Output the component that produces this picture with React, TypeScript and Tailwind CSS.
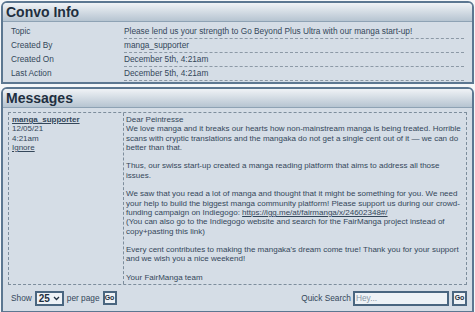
export default function App() {
  const rows = [
    ["Topic", "Please lend us your strength to Go Beyond Plus Ultra with our manga start-up!"],
    ["Created By", "manga_supporter"],
    ["Created On", "December 5th, 4:21am"],
    ["Last Action", "December 5th, 4:21am"],
  ]

  return (
    <div
      className="w-[475px] h-[312px] bg-[#f5f7f9] px-[1px] pt-[1px] text-[#34475a] overflow-hidden"
      style={{ fontFamily: "'Liberation Sans', Arial, sans-serif" }}
    >
      {/* Convo Info */}
      <div className="border-2 border-[#5c7791] rounded-t-[6px] overflow-hidden">
        <div className="h-[19px] bg-gradient-to-b from-[#f0f3f6] to-[#b6c4d1] border-b border-[#8ea2b4] pl-[3px] flex items-center">
          <span className="text-[14px] font-bold text-[#1f2f40]">Convo Info</span>
        </div>
        <div className="bg-[#d5dde6] px-[8px] pt-[3px] pb-[1px]">
          {rows.map(([label, value]) => (
            <div key={label} className="grid grid-cols-[113px_1fr] h-[14px] text-[8.3px] leading-[9px]">
              <div className="pt-[2px]">{label}</div>
              <div className="pt-[2px] border-b border-dashed border-[#8c99a6]">{value}</div>
            </div>
          ))}
        </div>
      </div>

      {/* Messages */}
      <div className="mt-[3px] border-2 border-[#5c7791] rounded-t-[6px] overflow-hidden">
        <div className="h-[19px] bg-gradient-to-b from-[#f0f3f6] to-[#b6c4d1] border-b border-[#8ea2b4] pl-[3px] flex items-center">
          <span className="text-[14px] font-bold text-[#1f2f40]">Messages</span>
        </div>
        <div className="bg-[#d5dde6] px-[5px] pt-[4px] pb-[5px]">
          <div className="grid grid-cols-[115px_1fr] border border-dashed border-[#7d8d9c] text-[8px] leading-[9.3px]">
            <div className="pl-[3px] pt-[2px] border-r border-dashed border-[#7d8d9c]">
              <div className="font-bold underline">manga_supporter</div>
              <div>12/05/21</div>
              <div>4:21am</div>
              <div className="underline">Ignore</div>
            </div>
            <div className="pl-[2px] pr-[3px] pt-[2px] pb-[2px]">
              <p>Dear Peintresse</p>
              <p>
                We love manga and it breaks our hearts how non-mainstream manga is being treated. Horrible scans with
                cryptic translations and the mangaka do not get a single cent out of it — we can do better than that.
              </p>
              <br />
              <p>Thus, our swiss start-up created a manga reading platform that aims to address all those issues.</p>
              <br />
              <p>
                We saw that you read a lot of manga and thought that it might be something for you. We need your help to
                build the biggest manga community platform! Please support us during our crowd-funding campaign on
                Indiegogo: <span className="underline">https://igg.me/at/fairmanga/x/24602348#/</span>
              </p>
              <p>
                (You can also go to the Indiegogo website and search for the FairManga project instead of copy+pasting
                this link)
              </p>
              <br />
              <p>
                Every cent contributes to making the mangaka's dream come true! Thank you for your support and we wish
                you a nice weekend!
              </p>
              <br />
              <p>Your FairManga team</p>
            </div>
          </div>

          {/* Footer */}
          <div className="flex items-center justify-between mt-[5px] h-[16px] text-[8.3px] pl-[3px] pr-[0px]">
            <div className="flex items-center gap-[3px]">
              <span>Show</span>
              <div className="w-[29px] h-[15px] border-2 border-[#4a6680] bg-[#eef2f6] flex items-center justify-between px-[2px]">
                <span className="text-[10px] font-bold text-[#1f2f40]">25</span>
                <svg width="7" height="5" viewBox="0 0 7 5">
                  <path d="M1 1 L3.5 3.5 L6 1" fill="none" stroke="#1f2f40" strokeWidth="1.3" />
                </svg>
              </div>
              <span>per page</span>
              <div className="w-[14px] h-[14px] border-2 border-[#4a6680] bg-[#eef2f6] flex items-center justify-center text-[7px] font-bold text-[#1f2f40]">
                Go
              </div>
            </div>
            <div className="flex items-center gap-[2px]">
              <span>Quick Search</span>
              <div className="w-[96px] h-[15px] border-2 border-[#4a6680] bg-[#eef2f6] flex items-center px-[1px] text-[#8797a6] text-[8.3px]">
                Hey...
              </div>
              <div className="ml-[1px] w-[15px] h-[15px] border-2 border-[#4a6680] bg-[#eef2f6] flex items-center justify-center text-[7px] font-bold text-[#1f2f40]">
                Go
              </div>
            </div>
          </div>
        </div>
      </div>
    </div>
  )
}
